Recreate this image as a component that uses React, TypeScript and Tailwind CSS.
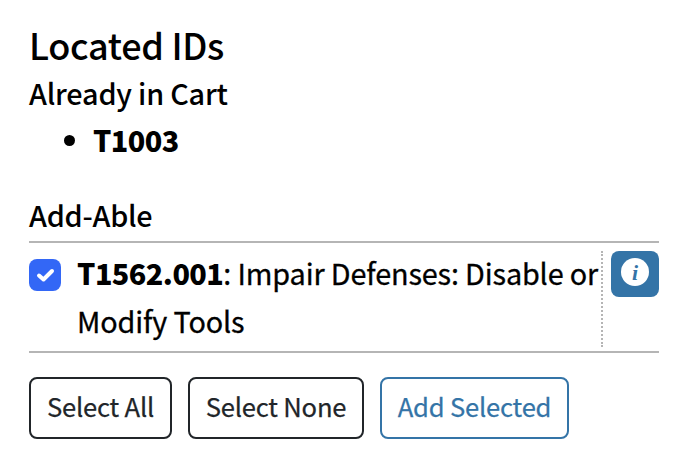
export default function App() {
  return (
    <main className="h-[471px] w-[685px] overflow-hidden bg-white pr-[26px] pl-[29px] pt-[20px] font-['Noto_Sans_CJK_JP',sans-serif] font-medium text-black">
      <h1 className="h-[49px] text-[36px] leading-[48px] tracking-[-0.3px]"><span className="inline-block">Located IDs</span></h1>
      <h2 className="h-[47px] text-[28.8px] leading-[47px] tracking-[-0.2px]"><span className="inline-block">Already in Cart</span></h2>
      <ul className="h-[75px] list-disc pl-[64px] text-[28.8px] leading-[47px]"><li className="font-black tracking-[-0.6px]"><span className="inline-block">T1003</span></li></ul>
      <h2 className="h-[50px] text-[28.8px] leading-[47px] tracking-[-0.25px]"><span className="inline-block">Add-Able</span></h2>
      <section className="flex h-[112px] border-y-2 border-[#b5b5b5] pt-[8px]">
        <div className="mt-[8px] flex size-[32px] shrink-0 items-center justify-center rounded-[8px] bg-[#3367f6]">
          <svg width="32" height="32" viewBox="0 0 32 32" fill="none" stroke="white" strokeWidth="4" strokeLinecap="round" strokeLinejoin="round"><path d="M10 16.5l4.5 4 8.5-8.5" /></svg>
        </div>
        <p className="ml-[16px] h-[96px] w-[526px] shrink-0 border-r-2 border-dotted border-[#b5b5b5] text-[28.8px] leading-[48px] font-normal tracking-[-0.14px] [-webkit-text-stroke:0.3px_black]"><span className="relative -top-[2px] block whitespace-nowrap"><b className="font-black tracking-[-0.55px] [-webkit-text-stroke:0]">T1562.001</b>: Impair Defenses: Disable or</span><span className="relative -top-[2px] block">Modify Tools</span></p>
        <button className="ml-[8px] flex h-[46px] w-[48px] shrink-0 justify-center rounded-[8px] bg-[#3474a7] pt-[7px]"><span className="flex size-[28px] items-center justify-center rounded-full bg-white font-['Liberation_Serif',serif] text-[22px] font-bold italic text-[#3474a7]">i</span></button>
      </section>
      <div className="mt-[24px] flex gap-[16px] text-[25.6px] font-normal tracking-[-0.2px] [-webkit-text-stroke:0.25px]">
        <button className="h-[62px] w-[143px] rounded-[8px] border-2 border-[#212529] pb-[3px] text-[#212529]">Select All</button>
        <button className="h-[62px] w-[176px] rounded-[8px] border-2 border-[#212529] pb-[3px] text-[#212529]">Select None</button>
        <button className="h-[62px] w-[189px] rounded-[8px] border-2 border-[#3474a7] pb-[3px] text-[#3474a7]">Add Selected</button>
      </div>
    </main>
  );
}
